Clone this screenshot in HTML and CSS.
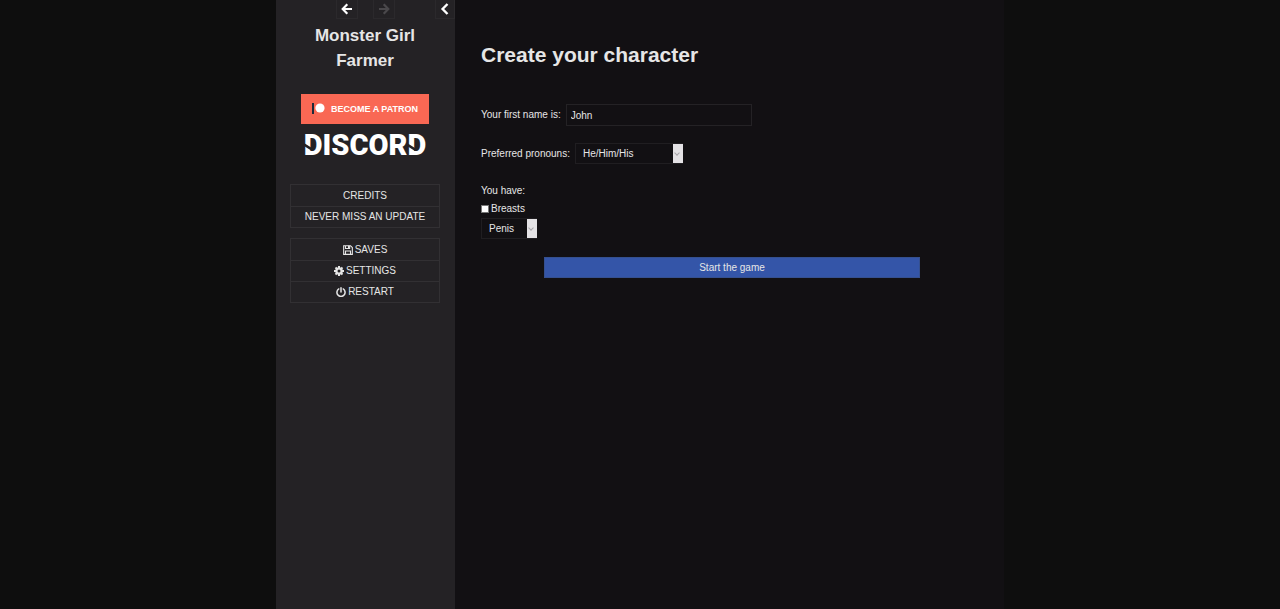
FILE: index.html
```html
<!DOCTYPE html>
<html lang="en">
<head>
    <meta charset="UTF-8">
    <meta name="viewport" content="width=device-width, initial-scale=1.0">
    <title>Monster Girl Farmer</title>
    <link rel="stylesheet" href="styles.css">
</head>
<body>
    <div class="game">
        <aside class="sidebar">
            <div class="history">
                <button class="history-button" type="button" aria-label="Back">
                    <svg width="12" height="12" viewBox="0 0 12 12"><path d="M6.3 1.2 1.7 6l4.6 4.8M2 6h9" fill="none" stroke="currentColor" stroke-width="2.2"/></svg>
                </button>
                <button class="history-button" type="button" aria-label="Forward" disabled>
                    <svg width="12" height="12" viewBox="0 0 12 12"><path d="M5.7 1.2 10.3 6l-4.6 4.8M10 6H1" fill="none" stroke="currentColor" stroke-width="2.2"/></svg>
                </button>
            </div>
            <button class="history-button toggle" type="button" aria-label="Toggle sidebar">
                <svg width="12" height="12" viewBox="0 0 12 12"><path d="M8.5 1 3.6 6l4.9 5" fill="none" stroke="currentColor" stroke-width="2.4"/></svg>
            </button>
            <h1 class="title">Monster Girl Farmer</h1>

            <a class="patron" href="#">
                <svg width="14" height="14" viewBox="0 0 14 14"><path fill="#1c2b3b" d="M0 1h2v11H0z"/><circle cx="8" cy="6" r="4.6" fill="#fff"/></svg>
                BECOME A PATRON
            </a>
            <a class="discord" href="#">
                <svg width="136" height="38" viewBox="0 0 136 38">
                    <text class="discord-text" x="68" y="29" text-anchor="middle">DISCORD</text>
                    <!-- cuts in the two outer letters -->
                    <path class="discord-cut" d="M7 17l8 5v3l-8-5zM110 17l8 5v3l-8-5z"/>
                </svg>
            </a>

            <nav class="menu">
                <button class="menu-item" type="button">CREDITS</button>
                <button class="menu-item" type="button">NEVER MISS AN UPDATE</button>
            </nav>
            <nav class="menu">
                <button class="menu-item" type="button">
                    <svg width="10" height="10" viewBox="0 0 12 12"><path fill="none" stroke="currentColor" stroke-width="1.3" d="M.8.8H9L11.2 3v8.2H.8zM3 11V7.2h6V11M3 1v3.2h5V1"/><path fill="currentColor" d="M6 1h1.6v2.6H6z"/></svg>
                    SAVES
                </button>
                <button class="menu-item" type="button">
                    <svg width="10" height="10" viewBox="0 0 12 12"><circle cx="6" cy="6" r="3.2" fill="none" stroke="currentColor" stroke-width="2.8"/><path stroke="currentColor" stroke-width="2.4" d="M6 0v3M6 9v3M0 6h3M9 6h3M1.8 1.8l2 2M8.2 8.2l2 2M10.2 1.8l-2 2M1.8 10.2l2-2"/></svg>
                    SETTINGS
                </button>
                <button class="menu-item" type="button">
                    <svg width="10" height="10" viewBox="0 0 12 12"><path fill="none" stroke="currentColor" stroke-width="1.8" stroke-linecap="round" d="M3.3 2.3a4.9 4.9 0 1 0 5.4 0M6 1v5"/></svg>
                    RESTART
                </button>
            </nav>
        </aside>

        <main class="story">
            <h2 class="heading">Create your character</h2>
            <div class="row">
                <label for="name">Your first name is:</label>
                <input class="textbox" id="name" type="text" value="John">
            </div>
            <div class="row">
                <label for="pronouns">Preferred pronouns:</label>
                <span class="dropdown">
                    <select class="select" id="pronouns">
                        <option>He/Him/His</option>
                    </select>
                </span>
            </div>
            <fieldset class="body-options">
                <legend>You have:</legend>
                <div class="check">
                    <input class="checkbox" id="breasts" type="checkbox">
                    <label for="breasts">Breasts</label>
                </div>
                <span class="dropdown">
                    <select class="select small" aria-label="Genitals">
                        <option>Penis</option>
                    </select>
                </span>
            </fieldset>
            <button class="start" type="button">Start the game</button>
        </main>
    </div>
</body>
</html>
```

FILE: styles.css
```css
* {
    box-sizing: border-box;
}
body {
    margin: 0;
    background-color: #0e0e0e;
    color: #e6e6e6;
    font-family: "Liberation Sans", Arial, sans-serif;
    font-size: 10px;
    line-height: 18px;
}
button,
input,
select {
    margin: 0;
    border-radius: 0;
    color: inherit;
    font: inherit;
}
button {
    cursor: pointer;
}
.game {
    display: flex;
    max-width: 728px;
    min-height: 100vh;
    margin: 0 auto;
    background-color: #121013;
}

/* sidebar */
.sidebar {
    display: flex;
    flex-direction: column;
    align-items: center;
    flex: 0 0 179px;
    position: relative;
    padding: 0 15px 0 14px;
    background-color: #242225;
}
.history {
    display: flex;
    gap: 15px;
}
.history-button {
    display: flex;
    align-items: center;
    justify-content: center;
    width: 22px;
    height: 19px;
    padding: 0;
    border: 1px solid #2b292c;
    border-top: 0;
    background: none;
    color: #fff;
}
.history-button:disabled {
    color: #4a484b;
}
.toggle {
    position: absolute;
    top: 0;
    right: 0;
    width: 20px;
}
.title {
    margin: 4px 0 21px;
    font-size: 17px;
    line-height: 25px;
    text-align: center;
}
.patron {
    display: flex;
    align-items: center;
    gap: 5px;
    height: 30px;
    padding: 0 11px;
    background-color: #f96854;
    color: #fff;
    font-size: 9px;
    font-weight: bold;
    text-decoration: none;
    white-space: nowrap;
}
.discord {
    display: block;
    height: 38px;
    margin: 2px 0 20px;
}
.discord-text {
    fill: #fff;
    font-family: Roboto, "Open Sans", sans-serif;
    font-size: 29px;
    font-weight: 900;
}
.discord-cut {
    fill: #242225;
}
.menu {
    width: 100%;
    margin-bottom: 10px;
    border: 1px solid #323033;
}
.menu-item {
    display: flex;
    align-items: center;
    justify-content: center;
    gap: 2px;
    width: 100%;
    height: 21px;
    padding: 0;
    border: 0;
    background: none;
    white-space: nowrap;
}
.menu-item + .menu-item {
    border-top: 1px solid #323033;
}

/* character form */
.story {
    flex: 1;
    padding: 40px 21px 20px 26px;
}
.heading {
    margin: 0 0 34px;
    font-size: 21px;
    line-height: 30px;
}
.row {
    display: flex;
    align-items: center;
    gap: 5px;
    margin-bottom: 17px;
}
.textbox {
    width: 186px;
    height: 22px;
    padding: 0 4px;
    border: 1px solid #242225;
    background: none;
}
.dropdown {
    display: inline-flex;
    position: relative;
}
.dropdown::after {
    content: "";
    position: absolute;
    top: 8px;
    right: 4px;
    width: 3px;
    height: 3px;
    border: solid #a8a6aa;
    border-width: 0 1px 1px 0;
    transform: rotate(45deg);
    pointer-events: none;
}
.select {
    width: 108px;
    height: 21px;
    padding: 0 14px 0 7px;
    appearance: none;
    border: 1px solid #201e21;
    border-right: 0;
    background: linear-gradient(#e4e2e5, #e4e2e5) right / 10px 100% no-repeat border-box;
}
.small {
    width: 56px;
}
.body-options {
    display: flex;
    flex-direction: column;
    align-items: flex-start;
    margin: 18px 0;
    padding: 0;
    border: 0;
}
.body-options legend {
    padding: 0;
}
.check {
    display: flex;
    align-items: center;
    gap: 2px;
}
.checkbox {
    width: 8px;
    height: 8px;
    appearance: none;
    border: 1px solid #767676;
    background-color: #fff;
}
.start {
    display: block;
    width: 75%;
    height: 21px;
    margin: 0 auto;
    padding: 0;
    border: 1px solid #35508f;
    background-color: #3455a8;
}
```
